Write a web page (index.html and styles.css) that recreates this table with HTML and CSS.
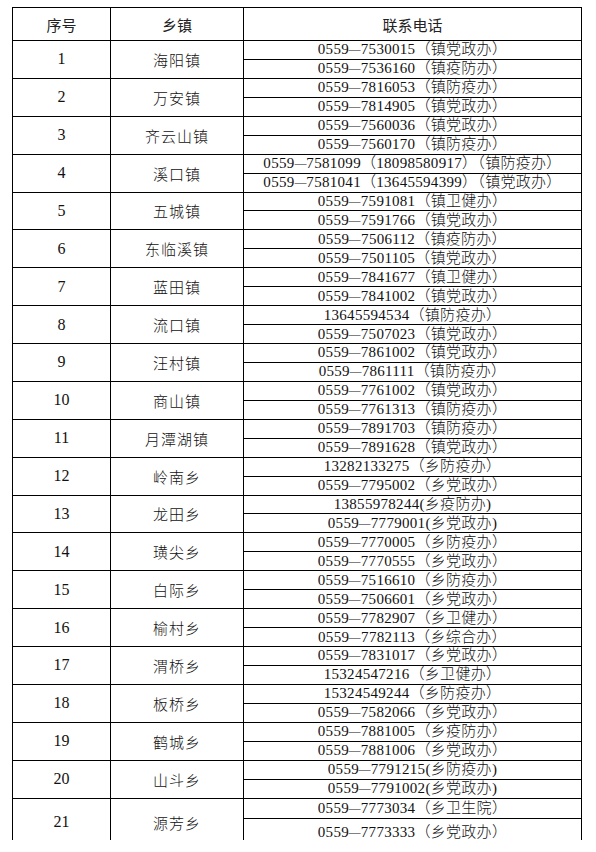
FILE: index.html
```html
<!DOCTYPE html>
<html lang="zh-CN">
<head>
<meta charset="utf-8">
<title>乡镇联系电话</title>
<link rel="stylesheet" href="styles.css">
</head>
<body>
<div class="page">
<div class="clip">
<table class="contacts">
<colgroup><col class="c-no"><col class="c-town"><col class="c-tel"></colgroup>
<thead>
<tr class="head"><th>序号</th><th>乡镇</th><th>联系电话</th></tr>
</thead>
<tbody>
<tr class="sub"><td class="no" rowspan="2">1</td><td class="town" rowspan="2">海阳镇</td><td class="tel">0559<span class="dash">–</span>7530015（镇党政办）</td></tr>
<tr class="sub"><td class="tel">0559<span class="dash">–</span>7536160（镇疫防办）</td></tr>
<tr class="sub"><td class="no" rowspan="2">2</td><td class="town" rowspan="2">万安镇</td><td class="tel">0559<span class="dash">–</span>7816053（镇防疫办）</td></tr>
<tr class="sub"><td class="tel">0559<span class="dash">–</span>7814905（镇党政办）</td></tr>
<tr class="sub"><td class="no" rowspan="2">3</td><td class="town" rowspan="2">齐云山镇</td><td class="tel">0559<span class="dash">–</span>7560036（镇党政办）</td></tr>
<tr class="sub"><td class="tel">0559<span class="dash">–</span>7560170（镇防疫办）</td></tr>
<tr class="sub"><td class="no" rowspan="2">4</td><td class="town" rowspan="2">溪口镇</td><td class="tel">0559<span class="dash">–</span>7581099（18098580917）（镇防疫办）</td></tr>
<tr class="sub"><td class="tel">0559<span class="dash">–</span>7581041（13645594399）（镇党政办）</td></tr>
<tr class="sub"><td class="no" rowspan="2">5</td><td class="town" rowspan="2">五城镇</td><td class="tel">0559<span class="dash">–</span>7591081（镇卫健办）</td></tr>
<tr class="sub"><td class="tel">0559<span class="dash">–</span>7591766（镇党政办）</td></tr>
<tr class="sub"><td class="no" rowspan="2">6</td><td class="town" rowspan="2">东临溪镇</td><td class="tel">0559<span class="dash">–</span>7506112（镇疫防办）</td></tr>
<tr class="sub"><td class="tel">0559<span class="dash">–</span>7501105（镇党政办）</td></tr>
<tr class="sub"><td class="no" rowspan="2">7</td><td class="town" rowspan="2">蓝田镇</td><td class="tel">0559<span class="dash">–</span>7841677（镇卫健办）</td></tr>
<tr class="sub"><td class="tel">0559<span class="dash">–</span>7841002（镇党政办）</td></tr>
<tr class="sub"><td class="no" rowspan="2">8</td><td class="town" rowspan="2">流口镇</td><td class="tel">13645594534（镇防疫办）</td></tr>
<tr class="sub"><td class="tel">0559<span class="dash">–</span>7507023（镇党政办）</td></tr>
<tr class="sub"><td class="no" rowspan="2">9</td><td class="town" rowspan="2">汪村镇</td><td class="tel">0559<span class="dash">–</span>7861002（镇党政办）</td></tr>
<tr class="sub"><td class="tel">0559<span class="dash">–</span>7861111（镇防疫办）</td></tr>
<tr class="sub"><td class="no" rowspan="2">10</td><td class="town" rowspan="2">商山镇</td><td class="tel">0559<span class="dash">–</span>7761002（镇党政办）</td></tr>
<tr class="sub"><td class="tel">0559<span class="dash">–</span>7761313（镇防疫办）</td></tr>
<tr class="sub"><td class="no" rowspan="2">11</td><td class="town" rowspan="2">月潭湖镇</td><td class="tel">0559<span class="dash">–</span>7891703（镇防疫办）</td></tr>
<tr class="sub"><td class="tel">0559<span class="dash">–</span>7891628（镇党政办）</td></tr>
<tr class="sub"><td class="no" rowspan="2">12</td><td class="town" rowspan="2">岭南乡</td><td class="tel">13282133275（乡防疫办）</td></tr>
<tr class="sub"><td class="tel">0559<span class="dash">–</span>7795002（乡党政办）</td></tr>
<tr class="sub"><td class="no" rowspan="2">13</td><td class="town" rowspan="2">龙田乡</td><td class="tel">13855978244(乡疫防办)</td></tr>
<tr class="sub"><td class="tel">0559<span class="dash">–</span>7779001(乡党政办)</td></tr>
<tr class="sub"><td class="no" rowspan="2">14</td><td class="town" rowspan="2">璜尖乡</td><td class="tel">0559<span class="dash">–</span>7770005（乡防疫办）</td></tr>
<tr class="sub"><td class="tel">0559<span class="dash">–</span>7770555（乡党政办）</td></tr>
<tr class="sub"><td class="no" rowspan="2">15</td><td class="town" rowspan="2">白际乡</td><td class="tel">0559<span class="dash">–</span>7516610（乡防疫办）</td></tr>
<tr class="sub"><td class="tel">0559<span class="dash">–</span>7506601（乡党政办）</td></tr>
<tr class="sub"><td class="no" rowspan="2">16</td><td class="town" rowspan="2">榆村乡</td><td class="tel">0559<span class="dash">–</span>7782907（乡卫健办）</td></tr>
<tr class="sub"><td class="tel">0559<span class="dash">–</span>7782113（乡综合办）</td></tr>
<tr class="sub"><td class="no" rowspan="2">17</td><td class="town" rowspan="2">渭桥乡</td><td class="tel">0559<span class="dash">–</span>7831017（乡党政办）</td></tr>
<tr class="sub"><td class="tel">15324547216（乡卫健办）</td></tr>
<tr class="sub"><td class="no" rowspan="2">18</td><td class="town" rowspan="2">板桥乡</td><td class="tel">15324549244（乡防疫办）</td></tr>
<tr class="sub"><td class="tel">0559<span class="dash">–</span>7582066（乡党政办）</td></tr>
<tr class="sub"><td class="no" rowspan="2">19</td><td class="town" rowspan="2">鹤城乡</td><td class="tel">0559<span class="dash">–</span>7881005（乡疫防办）</td></tr>
<tr class="sub"><td class="tel">0559<span class="dash">–</span>7881006（乡党政办）</td></tr>
<tr class="sub"><td class="no" rowspan="2">20</td><td class="town" rowspan="2">山斗乡</td><td class="tel">0559<span class="dash">–</span>7791215(乡防疫办)</td></tr>
<tr class="sub"><td class="tel">0559<span class="dash">–</span>7791002(乡党政办)</td></tr>
<tr class="sub first-last"><td class="no" rowspan="2">21</td><td class="town" rowspan="2">源芳乡</td><td class="tel">0559<span class="dash">–</span>7773034（乡卫生院）</td></tr>
<tr class="sub last"><td class="tel">0559<span class="dash">–</span>7773333（乡党政办）</td></tr>
</tbody>
</table>
</div>
</div>
</body>
</html>
```
FILE: styles.css
```css
html, body {
  margin: 0;
  padding: 0;
  background: #ffffff;
}

.page {
  padding: 7px 0 0 12px;
}

.clip {
  width: 572px;
  height: 833px;
  overflow: hidden;
}

.contacts {
  border-collapse: collapse;
  table-layout: fixed;
  width: 569px;
  color: #111;
  font-family: "Liberation Serif", "Noto Sans CJK SC", serif;
}

.c-no { width: 98px; }
.c-town { width: 133px; }
.c-tel { width: 338px; }

.contacts th,
.contacts td {
  border: 1px solid #000;
  padding: 0;
  text-align: center;
  vertical-align: middle;
  line-height: 1;
  white-space: nowrap;
}

.head th {
  height: 32px;
  font-family: "Noto Sans CJK SC", sans-serif;
  font-weight: 400;
  font-size: 15px;
  color: #222;
}

.sub {
  height: 18.95px;
}

.sub.first-last {
  height: 20px;
}

.sub.last {
  height: 28px;
}

.no {
  font-size: 16px;
}

.town {
  font-family: "Noto Sans CJK SC", sans-serif;
  font-weight: 300;
  font-size: 15px;
  letter-spacing: 1px;
}

.tel {
  font-size: 15px;
  font-weight: 300;
  letter-spacing: 0.3px;
}

.dash {
  display: inline-block;
  margin: 0 2px;
  transform: scaleX(1.55);
}
```
